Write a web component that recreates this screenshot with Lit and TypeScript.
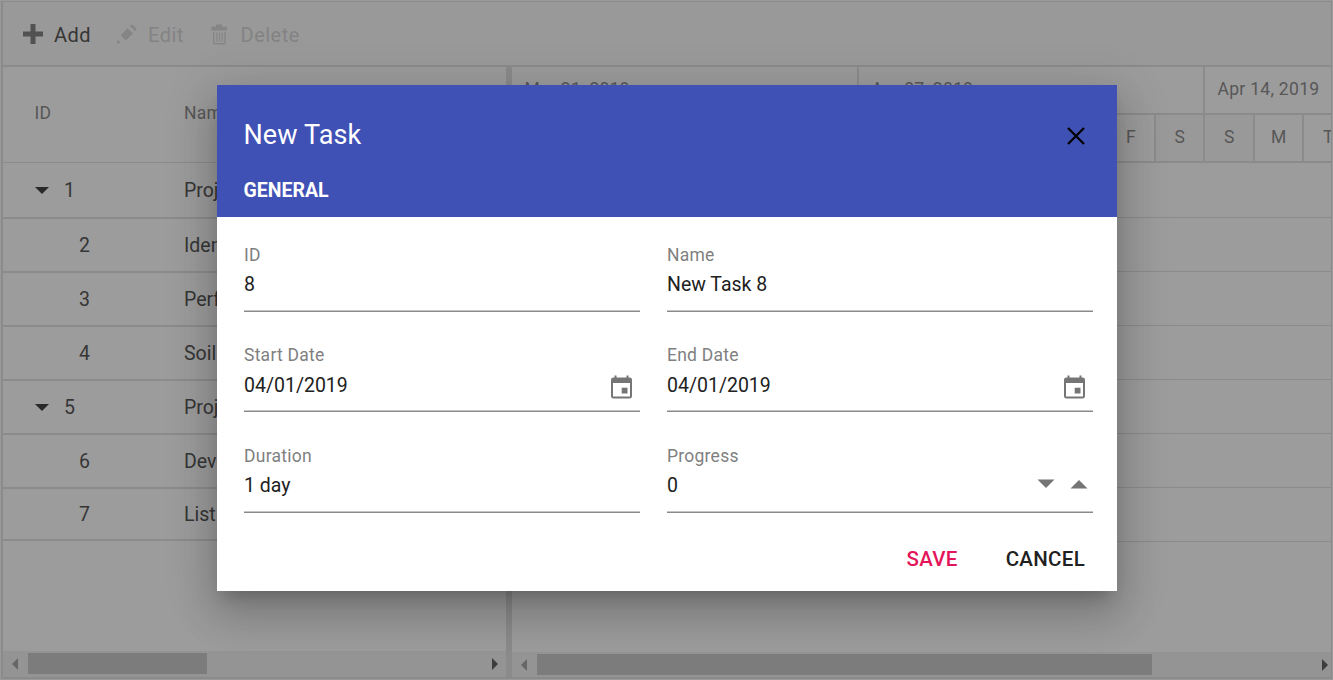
import { LitElement, html, svg, css } from "lit";
import { customElement } from "lit/decorators.js";
import { classMap } from "lit/directives/class-map.js";

interface Task {
  id: number;
  name: string;
  parent: boolean;
}

const TASKS: Task[] = [
  { id: 1, name: "Project Initiation", parent: true },
  { id: 2, name: "Identify Site location", parent: false },
  { id: 3, name: "Perform Soil test", parent: false },
  { id: 4, name: "Soil test approval", parent: false },
  { id: 5, name: "Project Estimation", parent: true },
  { id: 6, name: "Develop floor plan", parent: false },
  { id: 7, name: "List materials", parent: false },
];

const WEEKS = ["Mar 31, 2019", "Apr 07, 2019", "Apr 14, 2019"];
const DAYS = ["S", "M", "T", "W", "T", "F", "S"];

const calendarIcon = svg`
  <path fill="#757575" fill-rule="evenodd" d="M3.5 0.5h2v2h10v-2h2v2h1q2.5 0 2.5 2.2v16.6q0 2.2-2.5 2.2h-16q-2.500 0-2.500-2.200v-16.600q0-2.200 2.500-2.200h1zM2 8v13.500h17v-13.500z"/>
  <path fill="#757575" d="M10.700 12.700h5.800v5.800h-5.800z"/>`;

@customElement("app-root")
export class AppRoot extends LitElement {
  static styles = css`
    :host {
      display: block;
      position: relative;
      width: 1333px;
      height: 680px;
      overflow: hidden;
      background: #999;
      font-family: Roboto, "Liberation Sans", sans-serif;
      color: #363636;
    }
    * {
      box-sizing: border-box;
    }
    svg {
      display: block;
      flex: none;
    }
    .gantt {
      display: flex;
      flex-direction: column;
      height: 678px;
      margin: 0 1px;
      border: solid #8b8b8b;
      border-width: 1px 1px 2px 2px;
      position: relative;
      top: 1px;
    }
    .toolbar {
      display: flex;
      align-items: center;
      flex: none;
      height: 65px;
      padding: 1px 0 0 19.500px;
      border-bottom: 2px solid #8b8b8b;
      background: #999;
      font-size: 20px;
      letter-spacing: 0.5px;
    }
    .tool {
      display: flex;
      align-items: center;
      height: 30px;
    }
    .tool span {
      padding-top: 1px;
    }
    .tool.off {
      color: #838383;
    }
    .add { width: 94.500px; gap: 11.500px; }
    .edit { width: 94px; gap: 11px; }
    .delete { gap: 12.500px; }
    .panes {
      display: grid;
      grid-template-columns: 503px 6px 1fr;
      flex: 1;
      min-height: 0;
      background: #9c9c9c;
    }
    .splitter {
      background: #8b8b8b;
    }
    .pane {
      display: flex;
      flex-direction: column;
      min-width: 0;
      overflow: hidden;
    }
    .body {
      flex: 1;
      min-height: 0;
    }
    .columns {
      display: grid;
      grid-template-columns: 181px 1fr;
      align-items: center;
      height: 96px;
      padding-bottom: 4px;
      border-bottom: 1px solid #8b8b8b;
      font-size: 17.5px;
      letter-spacing: 0.2px;
      color: #575757;
    }
    .columns .first {
      padding-left: 31.500px;
    }
    .task {
      display: grid;
      grid-template-columns: 181px 1fr;
      align-items: center;
      height: 54px;
      border-bottom: 2px solid #8b8b8b;
      font-size: 19.5px;
      white-space: nowrap;
    }
    .task.first { height: 56px; }
    .task.last { height: 52px; }
    .id {
      display: flex;
      align-items: center;
      padding-left: 76px;
    }
    .id.parent {
      padding-left: 32.400px;
      gap: 14.600px;
    }
    .weeks {
      display: grid;
      grid-template-columns: 347px 346px 346px;
      height: 48px;
      flex: none;
      font-size: 17.5px;
      color: #575757;
    }
    .week {
      height: 48px;
      padding: 0 0 2px 12.500px;
      line-height: 44px;
      letter-spacing: 0.3px;
      border: solid #8b8b8b;
      border-width: 0 2px 2px 0;
    }
    .days {
      display: grid;
      grid-template-columns: 347px 346px 346px;
      height: 48px;
      flex: none;
      font-size: 17.5px;
      color: #575757;
    }
    .days-of-week {
      display: grid;
      grid-template-columns: 1fr 49px 50px 49px 50px 49px 49px;
    }
    .day {
      border: solid #8b8b8b;
      border-width: 0 2px 2px 0;
      padding-left: 0.500px;
      line-height: 44px;
      text-align: center;
    }
    .day.weekend {
      background: #999;
    }
    .line {
      height: 54px;
      border-bottom: 1px solid #8b8b8b;
    }
    .line.first { height: 55px; }
    .scroll {
      display: flex;
      align-items: center;
      flex: none;
      background: #949494;
      height: 25px;
    }
    .scroll.left { height: 26px; padding: 0 8px 1px 9px; }
    .scroll.right { padding: 0 3px 0 9px; }
    .thumb {
      height: 21px;
      margin-left: 10px;
      background: #7c7c7c;
    }
    .left .thumb { width: 179px; }
    .right .thumb { width: 615px; }
    .gap {
      flex: 1;
    }
    .dialog {
      position: absolute;
      left: 217px;
      top: 85px;
      width: 900px;
      height: 506px;
      background: #fff;
      color: #212121;
      box-shadow: 0 11px 15px -7px rgba(0, 0, 0, 0.2),
        0 24px 38px 3px rgba(0, 0, 0, 0.14),
        0 9px 46px 8px rgba(0, 0, 0, 0.12);
    }
    .head {
      height: 132px;
      padding: 33px 32px 0 26.500px;
      background: #3f51b5;
      color: #fff;
    }
    .title-row {
      display: flex;
      align-items: center;
      justify-content: space-between;
      height: 34px;
      font-size: 27px;
      letter-spacing: 0.1px;
    }
    .close {
      margin-top: 2px;
    }
    .tab {
      margin-top: 26px;
      font-size: 19.500px;
      font-weight: 700;
      line-height: 25px;
    }
    .form {
      display: grid;
      grid-template-columns: 396px 426px;
      grid-template-rows: 100px 101px 74px;
      column-gap: 27px;
      padding: 21px 24px 0 27px;
    }
    .field {
      height: 74px;
      border-bottom: 1px solid #8a8a8a;
      box-shadow: inset 0 -1px 0 #c4c4c4;
    }
    .label {
      height: 34px;
      line-height: 34px;
      font-size: 17.5px;
      letter-spacing: 0.25px;
      color: #7f7f7f;
    }
    .entry {
      display: flex;
      align-items: center;
      height: 24px;
      font-size: 19.5px;
    }
    .entry.date {
      height: 26px;
    }
    .spin {
      margin: -1px 5px 0 15px;
    }
    .spin.down {
      margin: -3px 0 0;
    }
    .cal {
      margin: 4px 8px 0 0;
    }
    .actions {
      display: flex;
      justify-content: flex-end;
      gap: 48px;
      padding: 34px 32px 0 0;
      font-size: 20.500px;
      font-weight: 500;
      line-height: 24px;
      letter-spacing: 0.3px;
    }
    .save {
      color: #e3165b;
    }
  `;

  private arrow(dir: "left" | "right", color: string) {
    return html`<svg width="6" height="12" viewBox="0 0 6 12">
      <path fill=${color} d=${dir === "left" ? "M6 0v12L0 6z" : "M0 0v12l6-6z"} />
    </svg>`;
  }

  private field(label: string, value: string, extra: unknown = null, date = false) {
    return html`<div class="field">
      <div class="label">${label}</div>
      <div class=${classMap({ entry: true, date })}><span>${value}</span><span class="gap"></span>${extra}</div>
    </div>`;
  }

  private calendar() {
    return html`<svg class="cal" width="21" height="24" viewBox="0 0 21 24">${calendarIcon}</svg>`;
  }

  render() {
    return html`
      <div class="gantt">
        <div class="toolbar">
          <div class="tool add">
            <svg width="20" height="20" viewBox="0 0 20 20"><path fill="#525252" d="M7.500 0h5v7.500h7.500v5h-7.500v7.500h-5v-7.500h-7.500v-5h7.500z" /></svg>
            <span>Add</span>
          </div>
          <div class="tool edit off">
            <svg width="20" height="20" viewBox="0 0 20 20">
              <path fill="#858585" d="M10.500 4.200l5.300 5.300-6 6q-1 1-2 0l-3.300-3.300q-1-1 0-2zM13.200 2l1-1q.8-.8 1.600 0l3.400 3.400q.8.800 0 1.600l-1 1zM.3 15.500l3.500 3.300-3.700.800z" />
            </svg>
            <span>Edit</span>
          </div>
          <div class="tool delete off">
            <svg width="17" height="21" viewBox="0 0 17 21">
              <path fill="#858585" fill-rule="evenodd" d="M5 .5h6v2.200h5v3.800h-15.500v-3.800h4.500zM2 8h12.800v11q0 1.500-1.500 1.500h-9.800q-1.500 0-1.500-1.500zM3.400 8v11h10v-11zM5.200 8.500h1.200v9h-1.200zM7.900 8.500h1.200v9h-1.200zM10.600 8.500h1.200v9h-1.200z" />
            </svg>
            <span>Delete</span>
          </div>
        </div>
        <div class="panes">
          <div class="pane">
            <div class="columns"><span class="first">ID</span><span>Name</span></div>
            <div class="body">
              ${TASKS.map(
                (t, i) => html`<div class=${classMap({ task: true, first: i === 0, last: i === TASKS.length - 1 })}>
                  <span class=${classMap({ id: true, parent: t.parent })}>
                    ${t.parent
                      ? html`<svg width="14" height="7" viewBox="0 0 14 7"><path fill="#292929" d="M0 0h14l-7 7z" /></svg>`
                      : null}
                    <span>${t.id}</span>
                  </span>
                  <span>${t.name}</span>
                </div>`
              )}
            </div>
            <div class="scroll left">
              ${this.arrow("left", "#666")}<span class="thumb"></span><span class="gap"></span>${this.arrow("right", "#3d3d3d")}
            </div>
          </div>
          <div class="splitter"></div>
          <div class="pane">
            <div class="weeks">${WEEKS.map((w) => html`<div class="week">${w}</div>`)}</div>
            <div class="days">
              ${WEEKS.map(
                () => html`<div class="days-of-week">
                  ${DAYS.map(
                    (d, i) => html`<div class=${classMap({ day: true, weekend: i === 0 || i === 6 })}>${d}</div>`
                  )}
                </div>`
              )}
            </div>
            <div class="body">
              ${TASKS.map((_, i) => html`<div class=${classMap({ line: true, first: i === 0 })}></div>`)}
            </div>
            <div class="scroll right">
              ${this.arrow("left", "#666")}<span class="thumb"></span><span class="gap"></span>${this.arrow("right", "#3d3d3d")}
            </div>
          </div>
        </div>
      </div>
      <div class="dialog">
        <div class="head">
          <div class="title-row">
            <span>New Task</span>
            <svg class="close" width="18" height="18" viewBox="0 0 18 18"><path fill="none" stroke="#000" stroke-width="2.300" d="M1 1l16 16M17 1L1 17" /></svg>
          </div>
          <div class="tab">GENERAL</div>
        </div>
        <div class="form">
          ${this.field("ID", "8")} ${this.field("Name", "New Task 8")}
          ${this.field("Start Date", "04/01/2019", this.calendar(), true)}
          ${this.field("End Date", "04/01/2019", this.calendar(), true)}
          ${this.field("Duration", "1 day")}
          ${this.field(
            "Progress",
            "0",
            html`<svg class="spin down" width="18" height="9" viewBox="0 0 18 9"><path fill="#757575" d="M.5.500h17L9 9z" /></svg>
              <svg class="spin" width="18" height="9" viewBox="0 0 18 9"><path fill="#757575" d="M.5 8.500h17L9 0z" /></svg>`
          )}
        </div>
        <div class="actions"><span class="save">SAVE</span><span>CANCEL</span></div>
      </div>
    `;
  }
}
